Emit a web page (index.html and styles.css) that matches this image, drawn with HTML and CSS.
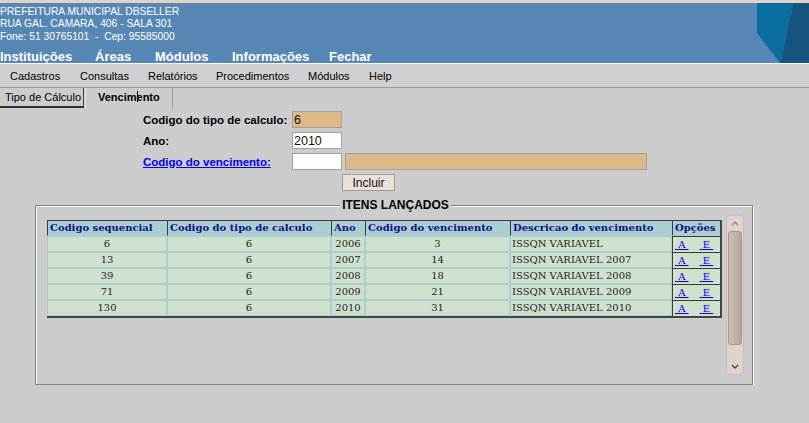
FILE: index.html
```html
<!DOCTYPE html>
<html lang="pt">
<head>
<meta charset="utf-8">
<title>DBSeller - Vencimento</title>
<link rel="stylesheet" href="styles.css">
</head>
<body>
<div class="topstrip"></div>
<header class="header">
  <div class="header-main">
    <div class="org">
      <div>PREFEITURA MUNICIPAL DBSELLER</div>
      <div>RUA GAL. CAMARA, 406 - SALA 301</div>
      <div>Fone: 51 30765101 &nbsp;- &nbsp;Cep: 95585000</div>
    </div>
    <nav class="mainnav">
      <span>Instituições</span>
      <span>Áreas</span>
      <span>Módulos</span>
      <span>Informações</span>
      <span>Fechar</span>
    </nav>
  </div>
  <svg class="logo" viewBox="0 0 52 60" width="52" height="60" aria-hidden="true">
    <polygon points="0,0 36.3,0 23.7,60 23,60 0,30.3" fill="#0b6ea1"/>
    <polygon points="36.3,0 52,0 52,60 23.7,60" fill="#14547e"/>
  </svg>
</header>
<nav class="menubar">
  <span>Cadastros</span>
  <span>Consultas</span>
  <span>Relatórios</span>
  <span>Procedimentos</span>
  <span>Módulos</span>
  <span>Help</span>
</nav>
<div class="tabs">
  <div class="tab">Tipo de Cálculo</div>
  <div class="tab tab-active">Vencim<span class="caret"></span>ento</div>
</div>
<form class="form">
  <label class="label">Codigo do tipo de calculo:</label>
  <input class="input tan" type="text" value="6">
  <label class="label row2">Ano:</label>
  <input class="input row2" type="text" value="2010">
  <a class="label link row3" href="#">Codigo do vencimento:</a>
  <input class="input row3" type="text" value="">
  <input class="input tan wide row3" type="text" value="">
  <button class="btn" type="button">Incluir</button>
</form>
<fieldset class="items">
  <legend class="legend">ITENS LANÇADOS</legend>
  <div class="scrollarea">
    <table class="grid">
      <thead>
        <tr>
          <th class="c1">Codigo sequencial</th>
          <th class="c2">Codigo do tipo de calculo</th>
          <th class="c3">Ano</th>
          <th class="c4">Codigo do vencimento</th>
          <th class="c5">Descricao do vencimento</th>
          <th class="c6">Opções</th>
        </tr>
      </thead>
      <tbody>
        <tr><td>6</td><td>6</td><td>2006</td><td>3</td><td class="desc">ISSQN VARIAVEL</td><td class="opt"><a href="#">&nbsp;A&nbsp;</a><a class="opt-e" href="#">&nbsp;E&nbsp;</a></td></tr>
        <tr><td>13</td><td>6</td><td>2007</td><td>14</td><td class="desc">ISSQN VARIAVEL 2007</td><td class="opt"><a href="#">&nbsp;A&nbsp;</a><a class="opt-e" href="#">&nbsp;E&nbsp;</a></td></tr>
        <tr><td>39</td><td>6</td><td>2008</td><td>18</td><td class="desc">ISSQN VARIAVEL 2008</td><td class="opt"><a href="#">&nbsp;A&nbsp;</a><a class="opt-e" href="#">&nbsp;E&nbsp;</a></td></tr>
        <tr><td>71</td><td>6</td><td>2009</td><td>21</td><td class="desc">ISSQN VARIAVEL 2009</td><td class="opt"><a href="#">&nbsp;A&nbsp;</a><a class="opt-e" href="#">&nbsp;E&nbsp;</a></td></tr>
        <tr><td>130</td><td>6</td><td>2010</td><td>31</td><td class="desc">ISSQN VARIAVEL 2010</td><td class="opt"><a href="#">&nbsp;A&nbsp;</a><a class="opt-e" href="#">&nbsp;E&nbsp;</a></td></tr>
      </tbody>
    </table>
    <div class="scrollbar">
      <div class="sb-btn">
        <svg width="8" height="5" viewBox="0 0 8 5"><polyline points="1,4 4,1 7,4" fill="none" stroke="#8a8078" stroke-width="1.2"/></svg>
      </div>
      <div class="thumb"></div>
      <div class="sb-space"></div>
      <div class="sb-btn">
        <svg width="8" height="5" viewBox="0 0 8 5"><polyline points="1,1 4,4 7,1" fill="none" stroke="#4a4440" stroke-width="1.4"/></svg>
      </div>
    </div>
  </div>
</fieldset>
</body>
</html>
```

FILE: styles.css
```css
* {
  box-sizing: border-box;
}

body {
  margin: 0;
  background: #cccccc;
  font-family: "Liberation Sans", Arial, sans-serif;
  color: #000;
}

.topstrip {
  height: 3px;
  background: #e1d3c8;
}

.header {
  display: flex;
  height: 61px;
  background: #5787b5;
  border-bottom: 1px solid #ffffff;
  color: #ffffff;
}

.header-main {
  flex: 1;
  padding-top: 3px;
}

.org {
  font-size: 10.3px;
  line-height: 12.4px;
}

.mainnav {
  display: grid;
  grid-template-columns: 95px 60px 77px 97px auto;
  margin-top: 7px;
  font-size: 13px;
  font-weight: bold;
  line-height: 14px;
  white-space: nowrap;
}

.logo {
  flex: none;
  display: block;
}

.menubar {
  display: grid;
  grid-template-columns: 70px 68px 68px 92px 61px auto;
  height: 24px;
  padding-left: 10px;
  padding-top: 1px;
  background: #cfcfcf;
  border-bottom: 1px solid #9a9a9a;
  font-size: 11px;
  line-height: 22px;
  white-space: nowrap;
}

.tabs {
  display: flex;
  height: 20px;
  font-size: 11px;
  line-height: 14px;
  white-space: nowrap;
}

.tab {
  width: 84px;
  padding: 2px 0 0 5px;
  border-right: 1px solid #444444;
  border-bottom: 2px solid #2e2e2e;
}

.tab-active {
  position: relative;
  width: 88px;
  margin-left: 1px;
  padding-left: 12px;
  font-weight: bold;
  border-left: 1px solid #e4e4e4;
  border-right: 1px solid #9a9a9a;
  border-bottom: none;
}

.caret {
  position: relative;
}

.caret::after {
  content: "";
  position: absolute;
  left: 0;
  top: 0;
  width: 1px;
  height: 11px;
  background: #000;
}

.form {
  display: grid;
  grid-template-columns: 149px 50px 3px 302px;
  grid-auto-rows: 17px;
  row-gap: 4px;
  align-items: center;
  margin: 3px 0 0 143px;
}

.label {
  grid-column: 1;
  font-size: 11.5px;
  font-weight: bold;
  white-space: nowrap;
}

.link {
  color: #0000ee;
  text-decoration: underline;
}

.row2 {
  grid-row: 2;
}

.row3 {
  grid-row: 3;
}

.input {
  grid-column: 2;
  width: 100%;
  height: 17px;
  margin: 0;
  padding: 0 1px;
  border: 1px solid #a0a0a0;
  background: #ffffff;
  font-family: "Liberation Sans", Arial, sans-serif;
  font-size: 12.5px;
  color: #111111;
  outline: none;
}

.tan {
  background: #deb887;
}

.wide {
  grid-column: 4;
}

.btn {
  grid-column: 3 / span 2;
  grid-row: 4;
  justify-self: start;
  width: 53px;
  height: 17px;
  margin: 0;
  padding: 0;
  border: 1px solid #a09a94;
  background: #e8e0d9;
  font-family: "Liberation Sans", Arial, sans-serif;
  font-size: 12px;
  color: #111111;
}

.items {
  width: 718px;
  margin: 7px 0 0 35px;
  padding: 3px 8px 9px 11px;
  border: 1px solid #808080;
  box-shadow: inset 1px 1px 0 #ffffff, 1px 1px 0 #ffffff;
  min-width: 0;
}

.legend {
  margin: 0 auto;
  padding: 0 2px;
  background: #cccccc;
  font-size: 12px;
  font-weight: bold;
  line-height: 14px;
}

.scrollarea {
  display: flex;
  justify-content: space-between;
  height: 160px;
}

.grid {
  align-self: flex-start;
  margin-top: 5px;
  border-collapse: separate;
  border-spacing: 0;
  table-layout: fixed;
  width: 675px;
  border-right: 2px solid #444444;
  border-bottom: 2px solid #444444;
  background: #a9cdd0;
  font-family: "DejaVu Serif", serif;
  font-size: 10px;
  line-height: 14px;
}

.grid th {
  padding: 0 0 0 2px;
  background: #a9cdd0;
  border-top: 1px solid #3c3c3c;
  border-left: 1px solid #3c3c3c;
  border-bottom: 1px solid #a9cdd0;
  color: #10108a;
  font-weight: bold;
  text-align: left;
  white-space: nowrap;
  overflow: hidden;
}

.c1 { width: 120px; }
.c2 { width: 164px; }
.c3 { width: 34px; }
.c4 { width: 145px; }
.c5 { width: 162px; }
.c6 { width: 48px; }

.grid td {
  padding: 0;
  background: #cfe0cc;
  border: 1px solid #a9cdd0;
  color: #1e1e1e;
  text-align: center;
  white-space: nowrap;
}

.grid td.desc {
  text-align: left;
  padding-left: 1px;
}

.grid td.opt {
  text-align: left;
  padding-left: 2px;
  border-left: 1px solid #3c3c3c;
  border-top: 1px solid #3c3c3c;
  border-right: none;
  border-bottom: none;
}

.opt a {
  color: #0000ee;
  text-decoration: underline;
}

.opt .opt-e {
  margin-left: 11px;
}

.scrollbar {
  flex: none;
  display: flex;
  flex-direction: column;
  align-items: center;
  width: 18px;
  height: 160px;
  border: 1px solid #cbbcae;
  border-radius: 3px;
  background: #ddd4cc;
}

.sb-btn {
  display: flex;
  align-items: center;
  justify-content: center;
  height: 15px;
  width: 100%;
}

.sb-btn svg {
  display: block;
}

.thumb {
  width: 14px;
  height: 114px;
  border: 1px solid #a69686;
  border-radius: 3px;
  background: linear-gradient(90deg, #cdbfb3 0%, #c3b3a5 45%, #b7a696 100%);
}

.sb-space {
  flex: 1;
}
```
